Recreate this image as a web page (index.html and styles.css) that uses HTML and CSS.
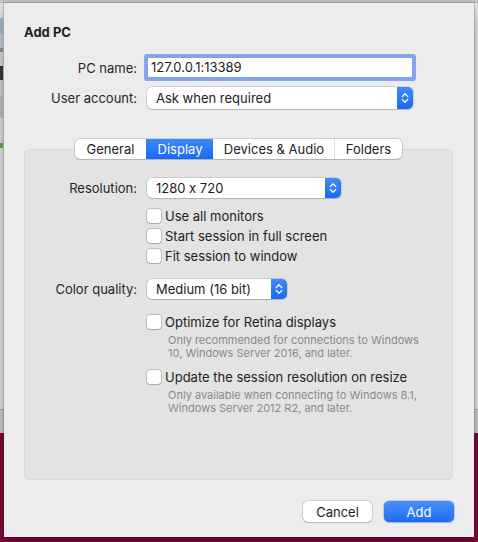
FILE: index.html
```html
<!DOCTYPE html>
<html lang="en">
<head>
<meta charset="utf-8">
<title>Add PC</title>
<link rel="stylesheet" href="styles.css">
</head>
<body>
<div class="backdrop">
  <div class="sheet">
    <h1 class="title">Add PC</h1>

    <div class="form">
      <label class="label">PC name:</label>
      <div class="textfield">127.0.0.1:13389</div>

      <label class="label">User account:</label>
      <div class="popup popup-wide">
        <span class="popup-text">Ask when required</span>
        <span class="stepper"><svg width="16" height="20" viewBox="0 0 16 20"><path d="M5.2 8.6 L8 5.8 L10.8 8.6 M5.2 11.4 L8 14.2 L10.8 11.4" stroke="#fff" stroke-width="1.3" fill="none" stroke-linecap="round" stroke-linejoin="round"/></svg></span>
      </div>
    </div>

    <div class="tabview">
      <div class="tabs">
        <span class="tab tab-general">General</span>
        <span class="tab tab-display active">Display</span>
        <span class="tab tab-devices">Devices &amp; Audio</span>
        <span class="tab tab-folders">Folders</span>
      </div>
      <div class="panel">
        <div class="form panel-form">
          <label class="label">Resolution:</label>
          <div class="control popup popup-res">
            <span class="popup-text">1280 x 720</span>
            <span class="stepper"><svg width="16" height="20" viewBox="0 0 16 20"><path d="M5.2 8.6 L8 5.8 L10.8 8.6 M5.2 11.4 L8 14.2 L10.8 11.4" stroke="#fff" stroke-width="1.3" fill="none" stroke-linecap="round" stroke-linejoin="round"/></svg></span>
          </div>

          <div class="control checks">
            <div class="check"><span class="box"></span><span>Use all monitors</span></div>
            <div class="check"><span class="box"></span><span>Start session in full screen</span></div>
            <div class="check"><span class="box"></span><span>Fit session to window</span></div>
          </div>

          <label class="label label-color">Color quality:</label>
          <div class="control popup popup-color">
            <span class="popup-text">Medium (16 bit)</span>
            <span class="stepper"><svg width="16" height="20" viewBox="0 0 16 20"><path d="M5.2 8.6 L8 5.8 L10.8 8.6 M5.2 11.4 L8 14.2 L10.8 11.4" stroke="#fff" stroke-width="1.3" fill="none" stroke-linecap="round" stroke-linejoin="round"/></svg></span>
          </div>

          <div class="control options">
            <div class="option">
              <div class="check"><span class="box"></span><span>Optimize for Retina displays</span></div>
              <p class="caption">Only recommended for connections to Windows 10, Windows Server 2016, and later.</p>
            </div>
            <div class="option">
              <div class="check"><span class="box"></span><span>Update the session resolution on resize</span></div>
              <p class="caption">Only available when connecting to Windows 8.1, Windows Server 2012 R2, and later.</p>
            </div>
          </div>
        </div>
      </div>
    </div>

    <div class="buttons">
      <button class="btn">Cancel</button>
      <button class="btn btn-primary">Add</button>
    </div>
  </div>
</div>
</body>
</html>
```

FILE: styles.css
```css
* { box-sizing: border-box; }

html, body {
  margin: 0;
  height: 100%;
}

body {
  font-family: Inter, "Noto Sans", "Liberation Sans", sans-serif;
  font-size: 13px;
  font-feature-settings: "calt" 0;
  color: #262626;
  overflow: hidden;
  background:
    linear-gradient(to bottom, transparent 0 18px, #a9bfd8 18px 34px, #c7d3e0 34px 48px, #8a96a3 48px 52px, #d9dde2 52px 66px, #3b3b3b 66px 80px, #d6d6d6 80px 96px, #bfc6cf 96px 118px, #dde3ea 118px 143px, #5fb34a 143px 148px, transparent 148px) 0 0 / 3px 100% no-repeat,
    linear-gradient(to bottom, #c5c5c5 0 3px, #e8e8e8 3px 409px, #b4b4b4 409px 410px, #d0d0d0 410px 433px, #830a3c 433px);
}

.backdrop {
  padding: 3px 0 0 4px;
}

.sheet {
  width: 470px;
  height: 534px;
  background: #ececec;
  box-shadow: 0 0 0 1px rgba(0, 0, 0, 0.14), 0 6px 18px rgba(0, 0, 0, 0.35);
  padding: 21px 20px 15px 20px;
  display: flex;
  flex-direction: column;
}

.title {
  margin: 0;
  font-size: 13px;
  line-height: 16px;
  font-weight: 700;
  color: #1e1e1e;
}

.form {
  display: grid;
  grid-template-columns: 113px 266px;
  column-gap: 10px;
  row-gap: 9px;
  align-items: center;
  margin-top: 17px;
}

.label {
  grid-column: 1;
  text-align: right;
  line-height: 16px;
  white-space: nowrap;
}

.textfield {
  height: 21px;
  background: #fff;
  border: 1px solid #7fa3ea;
  box-shadow: 0 0 0 3px rgba(98, 144, 236, 0.75);
  border-radius: 1px;
  padding: 0 0 0 3px;
  line-height: 19px;
  color: #1c1c1c;
}

.popup {
  height: 22px;
  display: flex;
  background: #fff;
  border-radius: 5px;
  box-shadow: 0 0 0 0.5px rgba(0, 0, 0, 0.22), 0 1px 1px rgba(0, 0, 0, 0.12);
}

.popup-text {
  flex: 1;
  padding-left: 9px;
  line-height: 22px;
  color: #1c1c1c;
  white-space: nowrap;
}

.stepper {
  width: 16px;
  display: flex;
  align-items: center;
  justify-content: center;
  border-radius: 0 5px 5px 0;
  background: linear-gradient(to bottom, #3f8bf8, #1b68f3);
}

.tabview {
  margin-top: 30px;
  display: flex;
  flex-direction: column;
}

.tabs {
  align-self: center;
  display: flex;
  height: 20px;
  position: relative;
  z-index: 1;
  margin-left: -1px;
  background: #fff;
  border-radius: 5px;
  box-shadow: 0 0 0 0.5px rgba(0, 0, 0, 0.25), 0 1px 1px rgba(0, 0, 0, 0.1);
}

.tab {
  line-height: 20px;
  text-align: center;
  color: #222;
  border-left: 1px solid #dcdcdc;
}

.tab-general { width: 71px; border-left: 0; border-radius: 5px 0 0 5px; }
.tab-display { width: 67px; }
.tab-devices { width: 121px; }
.tab-folders { width: 68px; border-radius: 0 5px 5px 0; }

.tab.active {
  color: #fff;
  border-left-color: transparent;
  background: linear-gradient(to bottom, #3d89f8, #1a69f4);
}
.tab.active + .tab { border-left-color: transparent; }

.panel {
  margin-top: -10px;
  height: 331px;
  width: 429px;
  background: #e3e3e3;
  border: 1px solid #d9d9d9;
  border-radius: 5px;
  padding-top: 28px;
}

.panel-form {
  margin-top: 0;
  grid-template-columns: 112px 1fr;
  row-gap: 0;
  align-items: start;
}

.control { grid-column: 2; }

.panel-form .label { line-height: 20px; }

.popup-res { width: 194px; height: 20px; }
.popup-res .popup-text { line-height: 20px; }
.popup-color { width: 140px; height: 20px; margin-top: 13px; }
.popup-color .popup-text { line-height: 20px; }
.label-color { margin-top: 13px; }

.checks {
  margin-top: 8px;
  display: flex;
  flex-direction: column;
}

.check {
  display: flex;
  align-items: center;
  gap: 4px;
  height: 20px;
  white-space: nowrap;
  color: #222;
}

.box {
  width: 14px;
  height: 14px;
  background: #fff;
  border-radius: 3px;
  box-shadow: 0 0 0 0.5px rgba(0, 0, 0, 0.32), 0 1px 1px rgba(0, 0, 0, 0.12);
  flex: none;
}

.options {
  margin-top: 13px;
  display: flex;
  flex-direction: column;
  gap: 7px;
}

.caption {
  margin: 2px 0 0 21px;
  font-size: 11px;
  line-height: 13px;
  color: #8a8a8a;
  width: 260px;
}

.buttons {
  margin-top: auto;
  display: flex;
  justify-content: flex-end;
  gap: 12px;
}

.btn {
  font-family: inherit;
  font-size: 13px;
  height: 21px;
  width: 69px;
  padding: 0;
  border: 0;
  border-radius: 5px;
  background: #fff;
  color: #222;
  box-shadow: 0 0 0 0.5px rgba(0, 0, 0, 0.25), 0 1px 1px rgba(0, 0, 0, 0.12);
}

.btn-primary {
  width: 70px;
  color: #fff;
  background: linear-gradient(to bottom, #4a90f9, #1d6cf5);
  box-shadow: 0 0 0 0.5px rgba(0, 60, 200, 0.4), 0 1px 1px rgba(0, 0, 0, 0.12);
}
```
